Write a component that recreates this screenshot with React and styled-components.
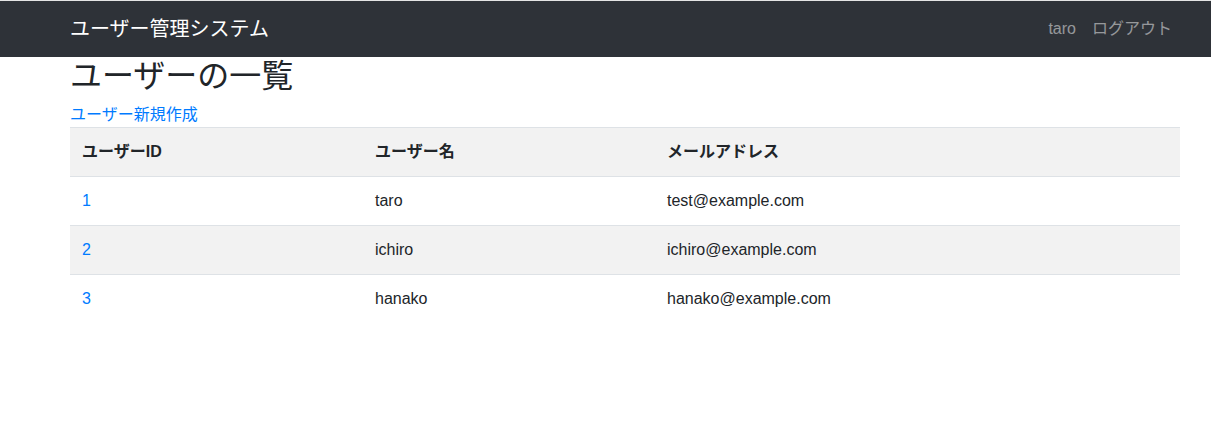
import React from 'react';
import styled, { createGlobalStyle } from 'styled-components';

const GlobalStyle = createGlobalStyle`
  * { box-sizing: border-box; }
  body {
    margin: 0;
    background: #fff;
    color: #212529;
    font-family: "Liberation Sans", "Noto Sans CJK JP", sans-serif;
    font-size: 16px;
    line-height: 1.5;
  }
`;

const Navbar = styled.nav`
  height: 57px;
  background-color: #2e3238;
  border-top: 1px solid #e4e4e4;
`;

const Container = styled.div`
  width: 1110px;
  margin-left: 70px;
`;

const NavInner = styled(Container)`
  height: 100%;
  display: flex;
  align-items: center;
  justify-content: space-between;
`;

const Brand = styled.a`
  color: #fff;
  font-size: 20px;
  line-height: 30px;
  text-decoration: none;
`;

const NavLinks = styled.ul`
  display: flex;
  list-style: none;
  margin: 0;
  padding: 0;
`;

const NavLink = styled.a`
  display: block;
  padding: 8px;
  color: rgba(255, 255, 255, 0.5);
  text-decoration: none;
`;

const Title = styled.h1`
  margin: 0 0 8px;
  font-size: 32px;
  font-weight: 400;
  line-height: 1.2;
`;

const Link = styled.a`
  color: #007bff;
  text-decoration: none;
`;

const Table = styled.table`
  width: 100%;
  border-collapse: collapse;
`;

const Row = styled.tr`
  background-color: ${(p) => (p.$striped ? '#f2f2f2' : 'transparent')};
`;

const Th = styled.th`
  width: ${(p) => p.$width || 'auto'};
  padding: 12px;
  text-align: left;
  font-weight: 700;
  border-top: 1px solid #dee2e6;
  border-bottom: 1px solid #dee2e6;
`;

const Td = styled.td`
  padding: 12px;
  border-top: 1px solid #dee2e6;
`;

const users = [
  { id: 1, name: 'taro', email: 'test@example.com' },
  { id: 2, name: 'ichiro', email: 'ichiro@example.com' },
  { id: 3, name: 'hanako', email: 'hanako@example.com' },
];

function App() {
  return (
    <>
      <GlobalStyle />
      <Navbar>
        <NavInner>
          <Brand href="#">ユーザー管理システム</Brand>
          <NavLinks>
            <li><NavLink href="#">taro</NavLink></li>
            <li><NavLink href="#">ログアウト</NavLink></li>
          </NavLinks>
        </NavInner>
      </Navbar>
      <Container>
        <Title>ユーザーの一覧</Title>
        <Link href="#">ユーザー新規作成</Link>
        <Table>
          <thead>
            <Row $striped>
              <Th $width="293px">ユーザーID</Th>
              <Th $width="292px">ユーザー名</Th>
              <Th>メールアドレス</Th>
            </Row>
          </thead>
          <tbody>
            {users.map((u, i) => (
              <Row key={u.id} $striped={i % 2 === 1}>
                <Td><Link href="#">{u.id}</Link></Td>
                <Td>{u.name}</Td>
                <Td>{u.email}</Td>
              </Row>
            ))}
          </tbody>
        </Table>
      </Container>
    </>
  );
}

export default App;
